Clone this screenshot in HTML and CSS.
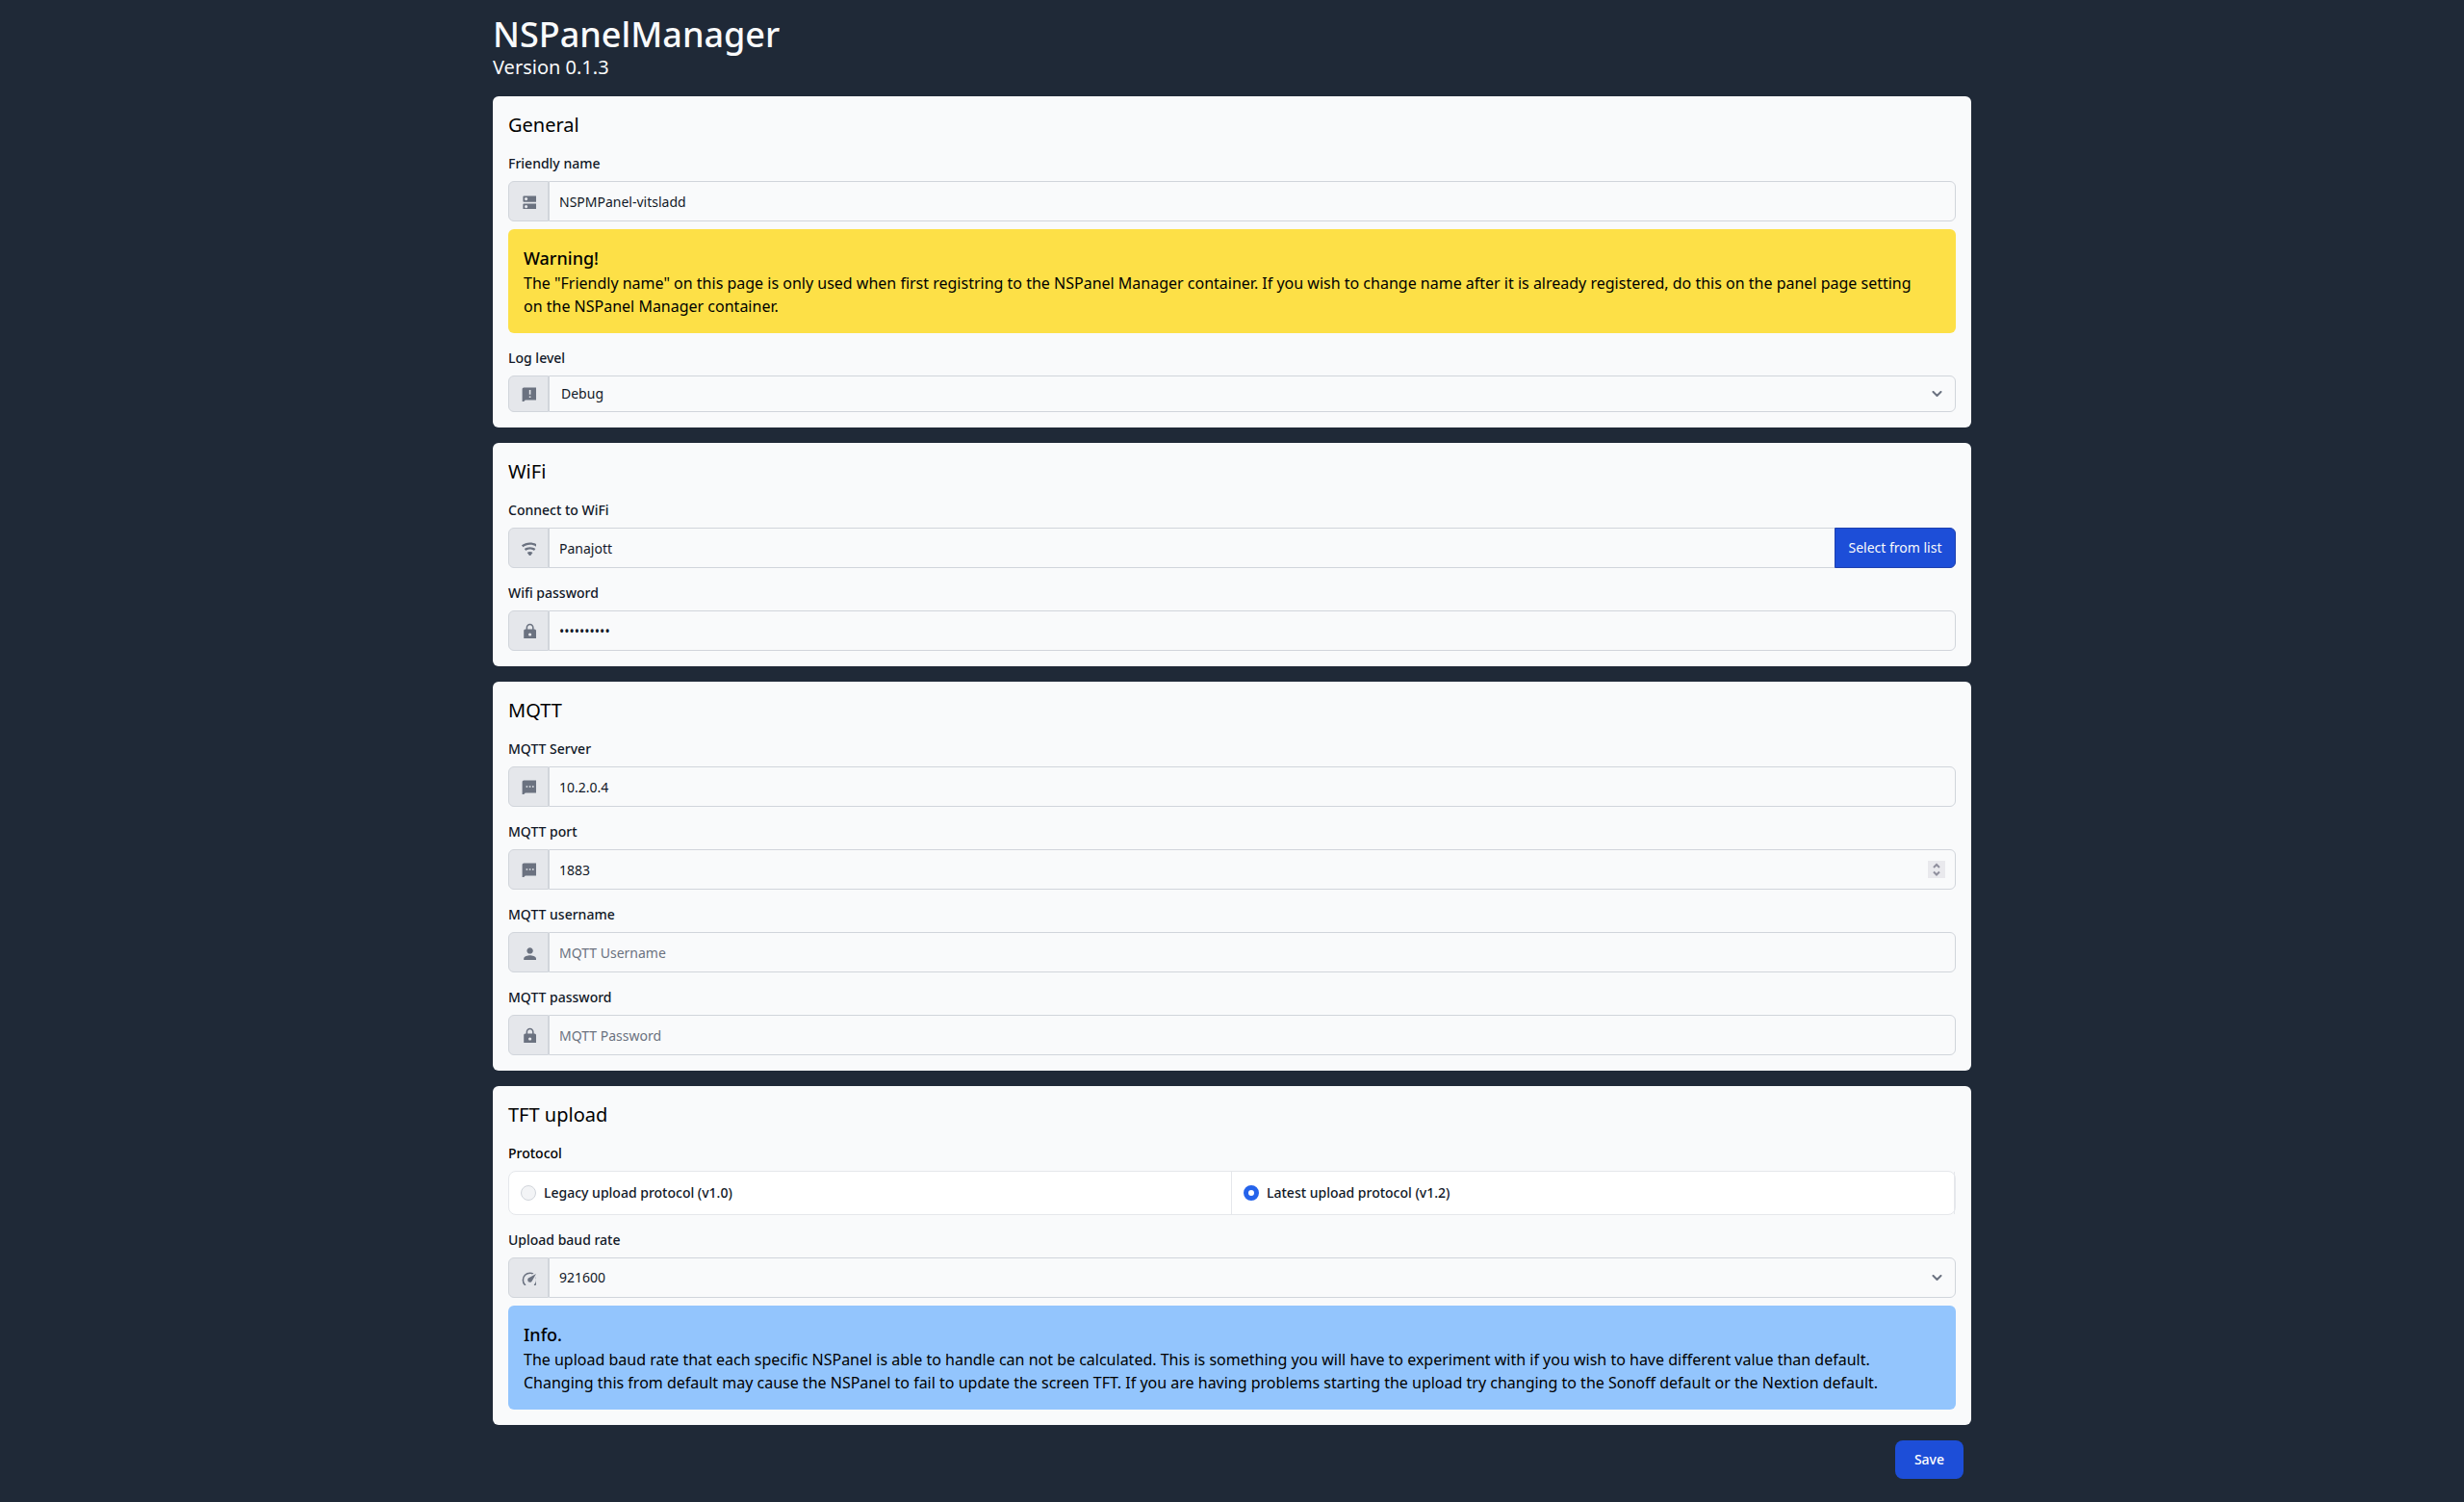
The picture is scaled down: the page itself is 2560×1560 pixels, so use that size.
FILE: index.html
```html
<!DOCTYPE html>
<html lang="en">
<head>
  <meta charset="utf-8">
  <meta name="viewport" content="width=device-width, initial-scale=1">
  <title>NSPanelManager</title>
  <link rel="stylesheet" href="styles.css">
</head>
<body>
  <main class="container">
    <header class="page-header">
      <h1 class="title">NSPanelManager</h1>
      <p class="version">Version 0.1.3</p>
    </header>

    <form class="settings">
      <section class="card">
        <h2 class="card-title">General</h2>
        <div class="field">
          <label class="label" for="friendly-name">Friendly name</label>
          <div class="group">
            <span class="addon"><svg class="icon" viewBox="0 0 20 20" aria-hidden="true"><path fill-rule="evenodd" d="M20 13H4c-.55 0-1 .45-1 1v6c0 .55.45 1 1 1h16c.55 0 1-.45 1-1v-6c0-.55-.45-1-1-1zM7 19c-1.1 0-2-.9-2-2s.9-2 2-2 2 .9 2 2-.9 2-2 2zM20 3H4c-.55 0-1 .45-1 1v6c0 .55.45 1 1 1h16c.55 0 1-.45 1-1V4c0-.55-.45-1-1-1zM7 9c-1.1 0-2-.9-2-2s.9-2 2-2 2 .9 2 2-.9 2-2 2z"/></svg></span>
            <input class="control" id="friendly-name" type="text" value="NSPMPanel-vitsladd">
          </div>
          <div class="notice notice-warning">
            <h3 class="notice-title">Warning!</h3>
            <p>The "Friendly name" on this page is only used when first registring to the NSPanel Manager container. If you wish to change name after it is already registered, do this on the panel page setting<br>on the NSPanel Manager container.</p>
          </div>
        </div>
        <div class="field">
          <label class="label" for="log-level">Log level</label>
          <div class="group">
            <span class="addon"><svg class="icon" viewBox="0 0 20 20" aria-hidden="true"><path d="M20 2H4c-1.1 0-2 .9-2 2v18l4-4h14c1.1 0 2-.9 2-2V4c0-1.1-.9-2-2-2zm-7 9h-2V5h2v6zm0 4h-2v-2h2v2z"/></svg></span>
            <div class="select-wrap">
              <select class="control control-compact" id="log-level"><option>Debug</option></select>
              <svg class="chevron" viewBox="0 0 10 6" aria-hidden="true"><path d="m1 1 4 4 4-4"/></svg>
            </div>
          </div>
        </div>
      </section>

      <section class="card">
        <h2 class="card-title">WiFi</h2>
        <div class="field">
          <label class="label" for="wifi-ssid">Connect to WiFi</label>
          <div class="group">
            <span class="addon"><svg class="icon" viewBox="0 0 20 20" aria-hidden="true"><path d="M12 21l3.600-4.800C14.600 15.450 13.350 15 12 15s-2.600.450-3.600 1.200L12 21M12 3C7.950 3 4.210 4.340 1.200 6.600L3 9c2.500-1.880 5.620-3 9-3s6.500 1.120 9 3l1.800-2.400C19.790 4.340 16.050 3 12 3m0 6c-2.700 0-5.190.890-7.200 2.400l1.800 2.400C8.100 12.670 9.970 12 12 12s3.900.670 5.400 1.800l1.800-2.400C17.190 9.890 14.700 9 12 9z"/></svg></span>
            <input class="control control-joined" id="wifi-ssid" type="text" value="Panajott">
            <button class="pick" type="button">Select from list</button>
          </div>
        </div>
        <div class="field">
          <label class="label" for="wifi-password">Wifi password</label>
          <div class="group">
            <span class="addon"><svg class="icon" viewBox="0 0 20 20" aria-hidden="true"><path d="M18 8h-1V6c0-2.760-2.240-5-5-5S7 3.240 7 6v2H6c-1.100 0-2 .9-2 2v10c0 1.100.9 2 2 2h12c1.100 0 2-.9 2-2V10c0-1.100-.9-2-2-2zm-6 9c-1.100 0-2-.9-2-2s.9-2 2-2 2 .9 2 2-.9 2-2 2zm3.100-9H8.900V6c0-1.710 1.390-3.100 3.100-3.100s3.100 1.390 3.100 3.100v2z"/></svg></span>
            <input class="control" id="wifi-password" type="password" value="abcdefghij">
          </div>
        </div>
      </section>

      <section class="card">
        <h2 class="card-title">MQTT</h2>
        <div class="field">
          <label class="label" for="mqtt-server">MQTT Server</label>
          <div class="group">
            <span class="addon"><svg class="icon" viewBox="0 0 20 20" aria-hidden="true"><path d="M20 2H4c-1.100 0-2 .9-2 2v18l4-4h14c1.100 0 2-.9 2-2V4c0-1.100-.9-2-2-2zM9 11H7V9h2v2zm4 0h-2V9h2v2zm4 0h-2V9h2v2z"/></svg></span>
            <input class="control" id="mqtt-server" type="text" value="10.2.0.4">
          </div>
        </div>
        <div class="field">
          <label class="label" for="mqtt-port">MQTT port</label>
          <div class="group">
            <span class="addon"><svg class="icon" viewBox="0 0 20 20" aria-hidden="true"><path d="M20 2H4c-1.100 0-2 .9-2 2v18l4-4h14c1.100 0 2-.9 2-2V4c0-1.100-.9-2-2-2zM9 11H7V9h2v2zm4 0h-2V9h2v2zm4 0h-2V9h2v2z"/></svg></span>
            <div class="select-wrap">
              <input class="control" id="mqtt-port" type="number" value="1883">
              <svg class="stepper" viewBox="0 0 18 18" aria-hidden="true"><path d="m6 7 3-3 3 3M6 11.500l3 3 3-3"/></svg>
            </div>
          </div>
        </div>
        <div class="field">
          <label class="label" for="mqtt-username">MQTT username</label>
          <div class="group">
            <span class="addon"><svg class="icon" viewBox="0 0 20 20" aria-hidden="true"><path d="M12 12c2.210 0 4-1.790 4-4s-1.790-4-4-4-4 1.790-4 4 1.790 4 4 4zm0 2c-2.670 0-8 1.340-8 4v2h16v-2c0-2.660-5.330-4-8-4z"/></svg></span>
            <input class="control" id="mqtt-username" type="text" placeholder="MQTT Username">
          </div>
        </div>
        <div class="field">
          <label class="label" for="mqtt-password">MQTT password</label>
          <div class="group">
            <span class="addon"><svg class="icon" viewBox="0 0 20 20" aria-hidden="true"><path d="M18 8h-1V6c0-2.760-2.240-5-5-5S7 3.240 7 6v2H6c-1.100 0-2 .9-2 2v10c0 1.100.9 2 2 2h12c1.100 0 2-.9 2-2V10c0-1.100-.9-2-2-2zm-6 9c-1.100 0-2-.9-2-2s.9-2 2-2 2 .9 2 2-.9 2-2 2zm3.100-9H8.900V6c0-1.710 1.390-3.100 3.100-3.100s3.100 1.390 3.100 3.100v2z"/></svg></span>
            <input class="control" id="mqtt-password" type="password" placeholder="MQTT Password">
          </div>
        </div>
      </section>

      <section class="card">
        <h2 class="card-title">TFT upload</h2>
        <div class="field" role="radiogroup" aria-labelledby="protocol-label">
          <h3 class="label label-heading" id="protocol-label">Protocol</h3>
          <ul class="options">
            <li class="option">
              <input class="radio" id="protocol-legacy" type="radio" name="protocol">
              <label class="option-label" for="protocol-legacy">Legacy upload protocol (v1.0)</label>
            </li>
            <li class="option">
              <input class="radio" id="protocol-latest" type="radio" name="protocol" checked>
              <label class="option-label" for="protocol-latest">Latest upload protocol (v1.2)</label>
            </li>
          </ul>
        </div>
        <div class="field">
          <label class="label" for="baud-rate">Upload baud rate</label>
          <div class="group">
            <span class="addon"><svg class="icon" viewBox="0 0 20 20" aria-hidden="true"><path d="M12 16a3 3 0 0 1-3-3c0-1.120.61-2.100 1.500-2.610l9.710-5.620-5.530 9.580c-.5.980-1.510 1.650-2.680 1.650m0-13c1.810 0 3.500.5 4.970 1.320l-2.100 1.210C14 5.190 13 5 12 5a8 8 0 0 0-8 8c0 2.210.89 4.210 2.340 5.650h.01c.39.39.39 1.020 0 1.410-.39.39-1.030.39-1.420.01A9.970 9.970 0 0 1 2 13 10 10 0 0 1 12 3m10 10c0 2.760-1.120 5.260-2.930 7.070-.39.380-1.020.380-1.410-.01a1 1 0 0 1 0-1.410A7.950 7.950 0 0 0 20 13c0-1-.19-2-.54-2.880l1.210-2.100C21.500 9.500 22 11.180 22 13z"/></svg></span>
            <div class="select-wrap">
              <select class="control" id="baud-rate"><option>921600</option></select>
              <svg class="chevron" viewBox="0 0 10 6" aria-hidden="true"><path d="m1 1 4 4 4-4"/></svg>
            </div>
          </div>
          <div class="notice notice-info">
            <h3 class="notice-title">Info.</h3>
            <p>The upload baud rate that each specific NSPanel is able to handle can not be calculated. This is something you will have to experiment with if you wish to have different value than default.<br>Changing this from default may cause the NSPanel to fail to update the screen TFT. If you are having problems starting the upload try changing to the Sonoff default or the Nextion default.</p>
          </div>
        </div>
      </section>

      <div class="actions">
        <button class="save" type="submit">Save</button>
      </div>
    </form>
  </main>
</body>
</html>
```
FILE: styles.css
```css
*,
*::before,
*::after {
  box-sizing: border-box;
}

body {
  margin: 0;
  background: #1f2937;
  color: #000;
  font-family: "Noto Sans", sans-serif;
  font-size: 16px;
  line-height: 24px;
}

h1,
h2,
h3,
p,
ul {
  margin: 0;
  padding: 0;
}

input,
select,
button {
  margin: 0;
  font-family: inherit;
}

.container {
  max-width: 1536px;
  margin: 0 auto;
  padding: 16px 0;
}

.page-header {
  margin-bottom: 16px;
  color: #f9fafb;
}

.title {
  font-size: 36px;
  font-weight: 500;
  line-height: 40px;
}

.version {
  font-size: 20px;
  line-height: 28px;
}

.settings {
  display: flex;
  flex-direction: column;
  gap: 16px;
}

.card {
  display: flex;
  flex-direction: column;
  gap: 16px;
  padding: 16px;
  border-radius: 6px;
  background: #f9fafb;
}

.card-title {
  font-size: 20px;
  font-weight: 400;
  line-height: 28px;
}

.label {
  display: block;
  margin-bottom: 8px;
  color: #111827;
  font-size: 14px;
  font-weight: 500;
  line-height: 20px;
}

.label-heading {
  color: #000;
}

.group {
  display: flex;
}

.addon {
  display: flex;
  align-items: center;
  padding: 0 12px;
  border: 1px solid #d1d5db;
  border-radius: 6px 0 0 6px;
  background: #e5e7eb;
}

.icon {
  width: 16px;
  height: 16px;
  overflow: hidden;
  fill: #6b7280;
}

.select-wrap {
  position: relative;
  display: flex;
  flex: 1;
}

.control {
  flex: 1;
  min-width: 0;
  padding: 10px;
  border: 1px solid #d1d5db;
  border-radius: 0 6px 6px 0;
  outline: none;
  background: #f9fafb;
  color: #111827;
  font-size: 14px;
  line-height: 20px;
  appearance: none;
}

input.control {
  height: 42px;
}

input[type="number"] {
  appearance: textfield;
}

input[type="number"]::-webkit-inner-spin-button {
  appearance: none;
}

.control::placeholder {
  color: #6b7280;
  opacity: 1;
}

.control-compact {
  padding: 8px 12px;
}

.control-joined {
  border-right: 0;
  border-radius: 0;
}

.chevron {
  position: absolute;
  top: calc(50% - 3px);
  right: 14px;
  width: 11px;
  height: 6px;
  fill: none;
  stroke: #6b7280;
  stroke-width: 2;
  stroke-linecap: round;
  stroke-linejoin: round;
  pointer-events: none;
}

.stepper {
  position: absolute;
  top: calc(50% - 9px);
  right: 11px;
  width: 18px;
  height: 18px;
  background: #e9e9ed;
  fill: none;
  stroke: #8f8f9d;
  stroke-width: 2;
}

.pick {
  min-width: 126px;
  padding: 10px 12px;
  border: 1px solid #1e40af;
  border-radius: 0 6px 6px 0;
  background: #1d4ed8;
  color: #f9fafb;
  font-size: 14px;
  line-height: 20px;
}

.notice {
  margin-top: 8px;
  padding: 16px;
  border-radius: 6px;
}

.notice-warning {
  background: #fde047;
}

.notice-info {
  background: #93c5fd;
}

.notice-title {
  font-size: 18px;
  font-weight: 500;
  line-height: 28px;
}

.options {
  display: flex;
  border: 1px solid #e5e7eb;
  border-radius: 8px;
  background: #fff;
  list-style: none;
}

.option {
  display: flex;
  flex: 1;
  align-items: center;
  padding-left: 12px;
  border-right: 1px solid #e5e7eb;
}

.radio {
  width: 16px;
  height: 16px;
  border: 1px solid #d1d5db;
  border-radius: 50%;
  background: #f3f4f6;
  appearance: none;
}

.radio:checked {
  border: 5px solid #2563eb;
  background: #fff;
}

.option-label {
  flex: 1;
  padding: 12px 0 12px 8px;
  color: #111827;
  font-size: 14px;
  font-weight: 500;
  line-height: 20px;
}

.actions {
  display: flex;
  justify-content: flex-end;
  padding-right: 8px;
}

.save {
  padding: 10px 20px;
  border: 0;
  border-radius: 8px;
  background: #1d4ed8;
  color: #fff;
  font-size: 14px;
  font-weight: 500;
  line-height: 20px;
}
```
